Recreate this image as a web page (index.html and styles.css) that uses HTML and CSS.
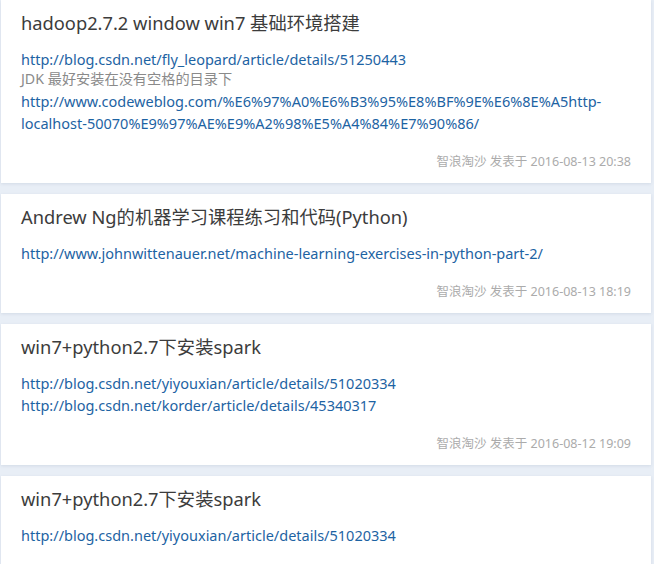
FILE: index.html
```html
<!DOCTYPE html>
<html lang="zh-CN">
<head>
<meta charset="utf-8">
<title>Posts</title>
<link rel="stylesheet" href="styles.css">
</head>
<body>
<div class="list">
  <article class="card">
    <h2 class="title">hadoop2.7.2 window win7 基础环境搭建</h2>
    <div class="content">
      <a class="link" href="#">http://blog.csdn.net/fly_leopard/article/details/51250443</a>
      <p class="note">JDK 最好安装在没有空格的目录下</p>
      <a class="link" href="#">http://www.codeweblog.com/%E6%97%A0%E6%B3%95%E8%BF%9E%E6%8E%A5http-localhost-50070%E9%97%AE%E9%A2%98%E5%A4%84%E7%90%86/</a>
    </div>
    <div class="meta">智浪淘沙 发表于 2016-08-13 20:38</div>
  </article>
  <article class="card">
    <h2 class="title">Andrew Ng的机器学习课程练习和代码(Python)</h2>
    <div class="content">
      <a class="link" href="#">http://www.johnwittenauer.net/machine-learning-exercises-in-python-part-2/</a>
    </div>
    <div class="meta">智浪淘沙 发表于 2016-08-13 18:19</div>
  </article>
  <article class="card">
    <h2 class="title">win7+python2.7下安装spark</h2>
    <div class="content">
      <a class="link" href="#">http://blog.csdn.net/yiyouxian/article/details/51020334</a>
      <a class="link" href="#">http://blog.csdn.net/korder/article/details/45340317</a>
    </div>
    <div class="meta">智浪淘沙 发表于 2016-08-12 19:09</div>
  </article>
  <article class="card">
    <h2 class="title">win7+python2.7下安装spark</h2>
    <div class="content">
      <a class="link" href="#">http://blog.csdn.net/yiyouxian/article/details/51020334</a>
    </div>
    <div class="meta">智浪淘沙 发表于 2016-08-12 19:09</div>
  </article>
</div>
</body>
</html>
```
FILE: styles.css
```css
html, body {
  margin: 0;
  padding: 0;
  background: #e8eef6;
}
body {
  font-family: "Noto Sans", "Noto Sans CJK SC", sans-serif;
}
.list {
  width: 650px;
  margin-left: 1px;
  display: flex;
  flex-direction: column;
  gap: 11px;
}
.card {
  background: #fff;
  padding: 10px 20px 11px 20px;
  box-shadow: 0 1px 3px rgba(60, 80, 120, 0.12);
}
.title {
  margin: 0;
  font-size: 18.3px;
  font-weight: normal;
  line-height: 26px;
  color: #3c3c3c;
}
.content {
  margin-top: 12px;
  display: flex;
  flex-direction: column;
}
.link {
  display: block;
  font-size: 14.5px;
  line-height: 22px;
  color: #1d63a3;
  text-decoration: none;
}
.note {
  margin: -1px 0 1px;
  font-size: 14.2px;
  line-height: 20px;
  color: #8a8a8a;
}
.meta {
  margin-top: 18px;
  text-align: right;
  font-size: 12.5px;
  line-height: 20px;
  color: #ababab;
}
```
